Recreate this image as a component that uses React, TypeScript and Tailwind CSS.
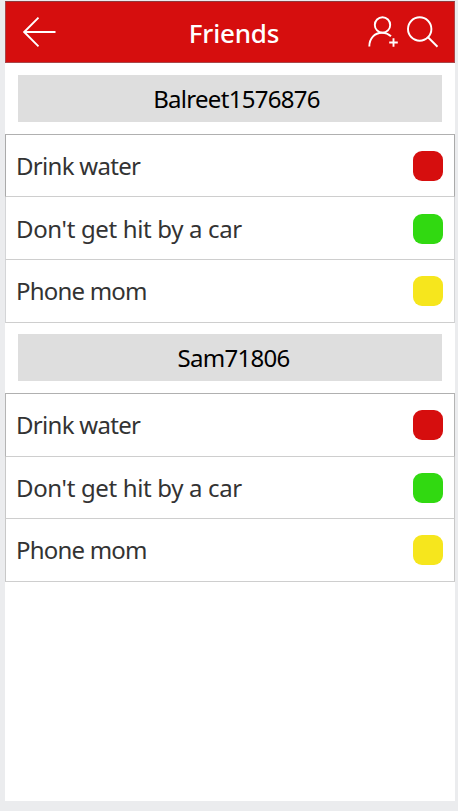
const groups = [
  {
    name: "Balreet1576876",
    gap: "pt-3",
    heading: "pl-[13px] tracking-[-0.7px]",
    rows: [
      { label: "Drink water", color: "bg-[#d60e0e]", box: "h-[63px] border-x-[#aaaaaa]", spacing: "tracking-[-0.7px]" },
      { label: "Don't get hit by a car", color: "bg-[#31d911]", box: "h-[63px] pt-px border-x-[#d4d5d7]", spacing: "tracking-[-0.34px]" },
      { label: "Phone mom", color: "bg-[#f6e61d]", box: "h-[63px] border-x-[#d4d5d7]", spacing: "tracking-[-0.8px]" },
    ],
  },
  {
    name: "Sam71806",
    gap: "pt-[11px]",
    heading: "pl-[7px] tracking-[-0.7px]",
    rows: [
      { label: "Drink water", color: "bg-[#d60e0e]", box: "h-[64px] border-x-[#b4b4b4]", spacing: "tracking-[-0.7px]" },
      { label: "Don't get hit by a car", color: "bg-[#31d911]", box: "h-[62px] border-x-[#c8c8c8]", spacing: "tracking-[-0.34px]" },
      { label: "Phone mom", color: "bg-[#f6e61d]", box: "h-[63px] border-x-[#c8c8c8] border-b-[#b8b8b8]", spacing: "tracking-[-0.8px]" },
    ],
  },
];

function Header() {
  return (
    <header className="grid h-[62px] grid-cols-[1fr_auto_1fr] items-center border border-[#a8474a] border-t-[#8f3a3c] bg-[#d60e0e] text-white">
      <svg className="ml-[17px] block" width="34" height="32" viewBox="0 0 34 32" fill="none" stroke="currentColor" strokeWidth="1.9">
        <path d="M32.500 16H1.200M15.500 1.700 1.200 16 15.500 30.300" />
      </svg>
      <h1 className="pt-px pl-[8px] text-[26px] leading-[34px] font-medium tracking-[-0.2px] whitespace-nowrap">Friends</h1>
      <div className="mr-[15px] flex items-center justify-end gap-[8px]">
        <svg className="block" width="31" height="32" viewBox="0 0 31 32" fill="none" stroke="currentColor" strokeWidth="1.9">
          <circle cx="14.500" cy="8.900" r="7.700" />
          <path d="M1.300 30.500C1.300 22.500 6.500 16.700 14 16.700c3.600 0 6.500 1.200 9 3.600M21.200 26.500h8.600M25.500 22.200v8.600" />
        </svg>
        <svg className="block" width="32" height="32" viewBox="0 0 32 32" fill="none" stroke="currentColor" strokeWidth="1.9">
          <circle cx="12.700" cy="13" r="11.700" />
          <path d="m21 21.300 9.500 9.400" />
        </svg>
      </div>
    </header>
  );
}

export default function App() {
  return (
    <div className="h-[811px] w-[458px] bg-[#ebecee] pr-[3px] pl-[5px] pt-px font-['Noto_Sans','Open_Sans',sans-serif]">
      <main className="h-[800px] bg-white">
        <Header />
        {groups.map((group) => (
          <section key={group.name} className={group.gap}>
            <h2 className={`mx-[13px] mb-3 flex h-[47px] items-center justify-center bg-[#dedede] text-[24px] leading-[34px] text-black ${group.heading}`}>
              {group.name}
            </h2>
            <ul className="border-t border-t-[#b0b0b0]">
              {group.rows.map((row) => (
                <li key={row.label} className={`flex items-center justify-between border-x border-b border-b-[#cecece] pr-[11px] pl-[10px] first:-mt-px first:border-t first:border-t-[#b0b0b0] ${row.box}`}>
                  <span className={`text-[24px] leading-[34px] whitespace-nowrap text-[#333333] ${row.spacing}`}>{row.label}</span>
                  <span className={`h-[30px] w-[30px] rounded-[9px] ${row.color}`} />
                </li>
              ))}
            </ul>
          </section>
        ))}
      </main>
    </div>
  );
}
